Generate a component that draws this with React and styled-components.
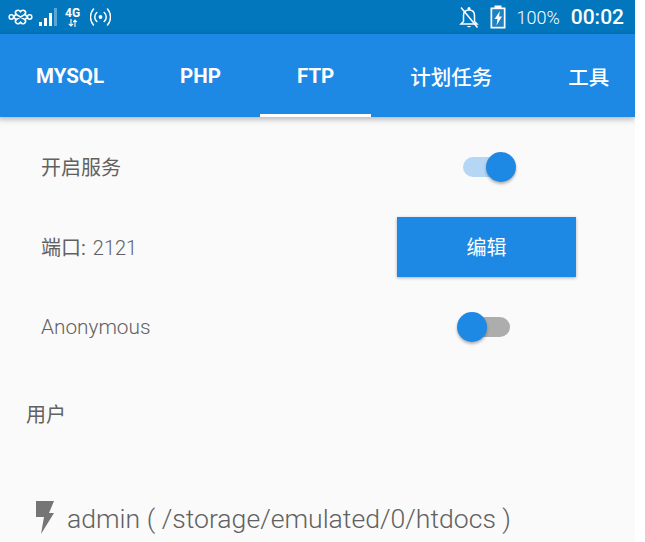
import React from "react";
import styled, { createGlobalStyle } from "styled-components";

const GlobalStyle = createGlobalStyle`
  html, body {
    margin: 0;
    padding: 0;
    background: #fff;
  }
  body {
    font-family: Roboto, "Noto Sans CJK SC", sans-serif;
  }
`;

const tabs = [
  { name: "MYSQL" },
  { name: "PHP" },
  { name: "FTP", active: true },
  { name: "计划任务", cjk: true },
  { name: "工具", cjk: true },
];

const App = () => {
  return (
    <React.Fragment>
      <GlobalStyle />
      <Screen>
        <StatusBar>
          <StatusGroup>
            <svg width="25" height="18" viewBox="0 0 26 18" fill="none" stroke="#fff" strokeWidth="1.600">
              <circle cx="3.500" cy="9" r="2.300" />
              <circle cx="22.500" cy="9" r="2.300" />
              <path d="M13 3.500c-2-3-6.500-1-5 2.500l10 6c1.500 3.500-3 5.500-5 2.500-2 3-6.500 1-5-2.500l10-6c1.500-3.500-3-5.500-5-2.500z" />
              <path d="M5.800 9 9 5.500M5.800 9 9 12.500M20.200 9 17 5.500M20.200 9 17 12.500" />
            </svg>
            <svg width="18" height="20" viewBox="0 0 18 20" fill="#fff">
              <rect x="0" y="15" width="3" height="4" />
              <rect x="5" y="11" width="3" height="8" />
              <rect x="10" y="6" width="3" height="13" />
              <rect x="15" y="1" width="3" height="18" opacity="0.35" />
            </svg>
            <NetworkType>
              <span>4G</span>
              <svg width="10" height="8" viewBox="0 0 10 8" fill="none" stroke="#fff" strokeWidth="1.100">
                <path d="M3 0v7M.8 4.800 3 7l2.200-2.200M7 8V1M5.200 3.200 7 1l1.800 2.200" />
              </svg>
            </NetworkType>
            <svg width="21" height="20" viewBox="0 0 21 20" fill="none" stroke="#fff" strokeWidth="1.500" strokeLinecap="round">
              <circle cx="10.500" cy="10" r="1.900" fill="#fff" stroke="none" />
              <path d="M6.800 5.500a6 6 0 0 0 0 9M14.200 5.500a6 6 0 0 1 0 9M3.500 2a12 12 0 0 0 0 16M17.500 2a12 12 0 0 1 0 16" />
            </svg>
          </StatusGroup>
          <StatusGroup>
            <BellIcon width="20" height="24" viewBox="0 0 20 24" fill="none" stroke="#fff" strokeWidth="1.500">
              <path d="M4.500 16.500v-6c0-3.500 2-5.500 5.500-5.500s5.500 2 5.500 5.500v6l2.500 2.500H2z" />
              <path d="M8 21c.5 1.800 3.500 1.800 4 0z" fill="#fff" stroke="none" />
              <circle cx="10" cy="3.500" r="1.500" fill="#fff" stroke="none" />
              <path d="M2 2.500 18.500 22.500" />
            </BellIcon>
            <svg width="16" height="24" viewBox="0 0 16 24">
              <path d="M4.500 .5h7V2.500H15.500v21H.5V2.500h4z" fill="#fff" />
              <rect x="2.200" y="4.200" width="11.600" height="17.600" fill="#1f82c2" />
              <path d="M10 6 4.500 14h3L6.500 20.500 12 11.500H9z" fill="#fff" />
            </svg>
            <BatteryText>100%</BatteryText>
            <Clock>00:02</Clock>
          </StatusGroup>
        </StatusBar>
        <TabBar>
          {tabs.map((t) => (
            <Tab key={t.name} $active={t.active} $cjk={t.cjk}>
              {t.name}
            </Tab>
          ))}
        </TabBar>
        <Content>
          <Row $height={100}>
            <Label $cjk>开启服务</Label>
            <SwitchCell>
              <SwitchTrack $on>
                <SwitchThumb $on />
              </SwitchTrack>
            </SwitchCell>
          </Row>
          <Row $height={60}>
            <Label $cjk>
              端口: <PortValue>2121</PortValue>
            </Label>
            <EditButton>编辑</EditButton>
          </Row>
          <Row $height={100}>
            <Label>
              <Light>Anonymous</Light>
            </Label>
            <SwitchCell>
              <SwitchTrack>
                <SwitchThumb />
              </SwitchTrack>
            </SwitchCell>
          </Row>
          <SectionTitle>用户</SectionTitle>
          <UserRow>
            <svg width="20" height="34" viewBox="0 0 20 34" fill="#757575">
              <path d="M1 1h18l-5 12h5L6 34l3-17H1z" />
            </svg>
            <UserText>admin ( /storage/emulated/0/htdocs )</UserText>
          </UserRow>
        </Content>
      </Screen>
    </React.Fragment>
  );
};

const Screen = styled.div`
  width: 635px;
  height: 542px;
  overflow: hidden;
  background: #fafafa;
  display: flex;
  flex-direction: column;
`;

const StatusBar = styled.div`
  height: 34px;
  flex: none;
  background: #0277bd;
  display: flex;
  align-items: center;
  justify-content: space-between;
  padding: 0 11px 0 8px;
  color: #fff;
`;

const StatusGroup = styled.div`
  display: flex;
  align-items: center;
  gap: 6px;
`;

const NetworkType = styled.div`
  display: flex;
  flex-direction: column;
  align-items: center;
  font-size: 12px;
  font-weight: 700;
  line-height: 11px;
  margin: 0 4px 0 2px;
`;

const BellIcon = styled.svg`
  margin-right: 5px;
`;

const BatteryText = styled.span`
  font-size: 18px;
  font-weight: 300;
  margin-left: 4px;
`;

const Clock = styled.span`
  font-size: 21px;
  font-weight: 500;
  margin-left: 5px;
`;

const TabBar = styled.div`
  height: 83px;
  flex: none;
  background: #1e88e5;
  display: flex;
  margin-left: -2px;
  box-shadow: 0 2px 6px rgba(0, 0, 0, 0.3);
`;

const Tab = styled.div`
  position: relative;
  padding: 0 38px;
  display: flex;
  align-items: center;
  white-space: nowrap;
  color: #fff;
  font-size: 20.500px;
  font-weight: ${(p) => (p.$cjk ? 500 : 700)};
  &::after {
    content: "";
    display: ${(p) => (p.$active ? "block" : "none")};
    position: absolute;
    left: 1px;
    right: 1px;
    bottom: 0;
    height: 3px;
    background: #fff;
  }
`;

const Content = styled.div`
  flex: 1;
  display: flex;
  flex-direction: column;
`;

const Row = styled.div`
  height: ${(p) => p.$height}px;
  flex: none;
  display: flex;
  align-items: center;
  justify-content: space-between;
  padding: 0 59px 0 41px;
`;

const Label = styled.div`
  font-size: 20px;
  color: #616161;
  padding-bottom: ${(p) => (p.$cjk ? 2 : 0)}px;
`;

const Light = styled.span`
  font-size: 20.800px;
  font-weight: 300;
`;

const PortValue = styled(Light)`
  font-size: 20px;
  margin-left: 2px;
`;

const SwitchCell = styled.div`
  width: 179px;
  display: flex;
  justify-content: center;
`;

const SwitchTrack = styled.div`
  width: 47px;
  height: 20px;
  border-radius: 10px;
  position: relative;
  background: ${(p) => (p.$on ? "#b5d6f4" : "#adadad")};
`;

const SwitchThumb = styled.div`
  position: absolute;
  top: -5px;
  ${(p) => (p.$on ? "right: -6px;" : "left: -6px;")}
  width: 30px;
  height: 30px;
  border-radius: 50%;
  background: #1e88e5;
  box-shadow: 0 2px 3px rgba(0, 0, 0, 0.3);
`;

const EditButton = styled.button`
  width: 179px;
  height: 60px;
  border: none;
  border-radius: 0;
  background: #1e88e5;
  color: #fff;
  font-family: inherit;
  font-size: 20px;
  padding: 0 0 2px;
  box-shadow: 0 1px 3px rgba(0, 0, 0, 0.3);
`;

const SectionTitle = styled.div`
  font-size: 20px;
  color: #616161;
  padding-left: 26px;
  margin-top: 22px;
`;

const UserRow = styled.div`
  display: flex;
  align-items: center;
  gap: 12px;
  padding-left: 35px;
  margin-top: 71px;
`;

const UserText = styled.div`
  font-size: 26.600px;
  font-weight: 300;
  color: #616161;
  white-space: nowrap;
  padding-top: 4px;
`;

export default App;
